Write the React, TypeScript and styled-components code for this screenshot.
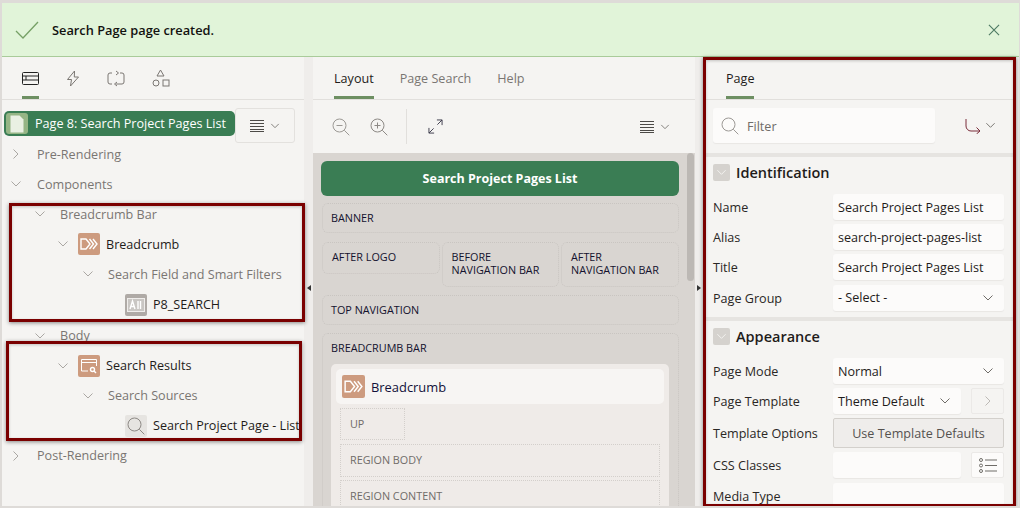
import React from "react";
import styled, { createGlobalStyle } from "styled-components";

const Global = createGlobalStyle`
  html, body { margin: 0; padding: 0; height: 100%; overflow: hidden; background: #fff; }
  body { font-family: "Open Sans", "Noto Sans", sans-serif; font-size: 12.6px; color: #1f1c1a; }
  * { box-sizing: border-box; }
`;

const Frame = styled.div`
  position: relative; width: 1020px; height: 508px; overflow: hidden;
  display: flex; flex-direction: column;
  border: solid #dedbd8; border-width: 3px 1px 2px 2px; background: #efedeb;
`;
const Banner = styled.div`
  height: 54px; flex: none; display: flex; align-items: center; background: #e1f4d9;
  border-bottom: 1px solid #a9cb9a; padding: 0 19px 0 13px; color: #12110f;
  font-weight: 600; font-size: 12.8px;
`;
const BannerText = styled.span` margin-left: 13px; flex: 1; `;
const Columns = styled.div` flex: 1; display: flex; min-height: 0; `;
const Panel = styled.div<{ $w: number }>`
  width: ${p => p.$w}px; flex: none; display: flex; flex-direction: column; background: #f5f4f2; overflow: hidden;
`;
const Splitter = styled.div<{ $w: number }>`
  width: ${p => p.$w}px; flex: none; display: flex; justify-content: center; padding-top: 228px; background: #efedeb;
`;
const Arrow = styled.span<{ $right?: boolean }>`
  width: 0; height: 0; border-style: solid; border-width: 3.5px 0 3.5px 4px;
  border-color: transparent transparent transparent #333;
  transform: ${p => (p.$right ? "none" : "rotate(180deg)")};
`;
const Tabs = styled.div<{ $pad: number; $gap: number }>`
  height: 43px; flex: none; display: flex; gap: ${p => p.$gap}px; padding-left: ${p => p.$pad}px;
  border-bottom: 1px solid #e1dfdc;
`;
const Tab = styled.div<{ $active?: boolean }>`
  height: 42px; display: flex; align-items: center; padding-top: 3px;
  color: ${p => (p.$active ? "#1f1c1a" : "#7a7672")};
  border-bottom: 3px solid ${p => (p.$active ? "#6d8f62" : "transparent")};
`;
const RootRow = styled.div` height: 39px; flex: none; display: flex; align-items: flex-start; padding: 8px 0 0 2px; `;
const RootBadge = styled.div`
  width: 231px; height: 25px; margin-top: 3px; display: flex; align-items: center; gap: 7px; padding-left: 2px;
  background: #3a7d54; color: #fff; border-radius: 5px; white-space: nowrap;
`;
const RootIcon = styled.span`
  width: 22px; height: 21px; display: flex; align-items: center; justify-content: center;
  background: #95b585; border-radius: 3px;
`;
const MenuButton = styled.div`
  width: 60px; height: 35px; display: flex; align-items: center; justify-content: center; gap: 6px;
  border: 1px solid #e3e1de; border-radius: 3px; background: #f5f4f2;
`;
const Tree = styled.div` flex: 1; `;
const TreeRow = styled.div<{ $x: number; $strong?: boolean; $top?: number }>`
  height: 30.1px; display: flex; align-items: center; white-space: nowrap; overflow: hidden;
  margin-top: ${p => p.$top ?? 0}px;
  padding-left: ${p => p.$x}px; color: ${p => (p.$strong ? "#1f1c1a" : "#7a7672")};
`;
const Twisty = styled.span<{ $gap?: number }>` width: 12px; height: 12px; flex: none; display: flex; margin-right: ${p => p.$gap ?? 14}px; `;
const TreeIcon = styled.span<{ $bg: string }>`
  width: 22px; height: 22px; flex: none; margin-right: 6px; border-radius: 2px; background: ${p => p.$bg};
  display: flex; align-items: center; justify-content: center;
`;
const Toolbar = styled.div`
  height: 53px; flex: none; display: flex; align-items: center; padding-left: 19px; padding-right: 25px;
`;
const Divider = styled.span` width: 1px; height: 35px; background: #e1dfdc; margin: 0 21px 0 18px; `;
const Spacer = styled.span` flex: 1; `;
const ZoomGap = styled.span` width: 20px; `;
const MenuGap = styled.span` width: 6px; `;
const Canvas = styled.div`
  position: relative; flex: 1; background: #d9d5d1; padding: 8px 16px 0 8px; overflow: hidden;
  display: flex; flex-direction: column; gap: 7px;
`;
const ScrollThumb = styled.span`
  position: absolute; right: 1px; top: 0; width: 7px; height: 128px; border-radius: 4px; background: #bcb8b4;
`;
const PageTitle = styled.div`
  height: 35px; flex: none; display: flex; align-items: center; justify-content: center; padding-bottom: 1px;
  background: #3a7d54; color: #fff; border-radius: 6px; font-weight: 700; font-size: 12.5px;
`;
const Slot = styled.div<{ $h: number; $top?: number }>`
  flex: none; height: ${p => p.$h}px; padding: 7px 8px; border: 1px dotted #c9c5c1; border-radius: 6px;
  margin-top: ${p => p.$top ?? 0}px; margin-left: 1px;
  font-size: 10.8px; font-weight: 500; line-height: 13px; color: #14122e;
`;
const SlotRow = styled.div` display: flex; gap: 2px; margin-top: 2px; margin-left: 1px; flex: none; align-items: flex-start; `;
const Cell = styled(Slot)` width: 117.5px; margin-left: 0; padding-left: 9px; `;
const BarSlot = styled(Slot)` padding: 7px 9px 0 8px; display: flex; flex-direction: column; `;
const Card = styled.div`
  margin-top: 10px; background: #efebe8; border-radius: 5px; padding: 5px; flex: none; height: 200px;
  display: flex; flex-direction: column;
`;
const CardHead = styled.div`
  height: 35px; flex: none; display: flex; align-items: center; gap: 6px; padding-left: 6px; background: #f7f5f3; border-radius: 5px;
  font-size: 12.9px; font-weight: 500; color: #12113a;
`;
const CardHeadText = styled.span` padding-top: 1px; `;
const Sub = styled.div<{ $w?: number; $h: number; $top?: number }>`
  flex: none; margin: ${p => p.$top ?? 4}px 4px 0; height: ${p => p.$h}px; width: ${p => (p.$w ? `${p.$w}px` : "auto")};
  border: 1px dotted #d3cfcb; padding: 0 0 2px 9px; display: flex; align-items: center;
  font-size: 10.8px; color: #6f6c68;
`;
const FilterRow = styled.div`
  height: 53px; flex: none; display: flex; align-items: flex-start; padding: 8px 0 0 10px;
`;
const FilterBox = styled.div`
  width: 222px; height: 35px; display: flex; align-items: center; gap: 8px; padding: 1px 0 0 8px; background: #fcfbfa;
  border-radius: 3px; color: #6f6c68; box-shadow: 0 1px 1px #e9e7e4;
`;
const RouteButton = styled.div` display: flex; align-items: center; gap: 4px; margin-left: 30px; height: 35px; `;
const Section = styled.div<{ $top?: number }>`
  flex: none; border-top: 4px solid #e6e4e1; padding: 0 10px; display: flex; flex-direction: column;
  margin-top: ${p => p.$top ?? 0}px;
`;
const SectionHead = styled.div`
  height: 30px; margin-bottom: 5px; flex: none; display: flex; align-items: center; gap: 6px;
  font-size: 14.5px; font-weight: 600; color: #1f1c1a;
`;
const Collapse = styled.span`
  width: 17px; height: 17px; display: flex; align-items: center; justify-content: center; background: #d5d2ce; border-radius: 2px;
`;
const Prop = styled.div<{ $h?: number }>`
  display: flex; align-items: center; height: ${p => p.$h ?? 30}px; flex: none;
`;
const Label = styled.div<{ $drop?: boolean }>`
  width: 120px; flex: none; color: #2a2725; padding-top: ${p => (p.$drop ? 1 : 0)}px;
`;
const Field = styled.div<{ $w?: number }>`
  width: ${p => p.$w ?? 171}px; height: 26px; flex: none; display: flex; align-items: center; justify-content: space-between;
  padding: 0 10px 0 5px; background: #fcfbfa; border-radius: 3px; white-space: nowrap; color: #1f1c1a;
  box-shadow: 0 1px 1px #e9e7e4;
`;
const SmallButton = styled.div<{ $dim?: boolean }>`
  width: 33px; height: 26px; margin-left: 10px; display: flex; align-items: center; justify-content: center;
  background: ${p => (p.$dim ? "#f5f4f2" : "#fcfbfa")}; border: 1px solid #ebe9e7; border-radius: 2px;
`;
const WideButton = styled.div`
  width: 171px; height: 30px; display: flex; align-items: center; justify-content: center;
  background: #efedeb; border: 1px solid #d3d0cc; border-radius: 2px; color: #55524f;
`;
const Outline = styled.div<{ $x: number; $y: number; $w: number; $h: number }>`
  position: absolute; left: ${p => p.$x}px; top: ${p => p.$y}px; width: ${p => p.$w}px; height: ${p => p.$h}px;
  border: 3px solid #7a0000; box-shadow: 0 1px 4px rgba(0,0,0,.45), inset 0 1px 3px rgba(0,0,0,.2); pointer-events: none;
`;

type C = { c?: string; s?: number };
const Chevron = ({ c = "#6f6c68", s = 12 }: C) => (
  <svg width={s} height={s} viewBox="0 0 12 12" fill="none" stroke={c} strokeWidth="1"><path d="M1.5 3.5 6 8l4.5-4.5" /></svg>
);
const ChevronR = ({ c = "#aaa7a3", s = 12 }: C) => (
  <svg width={s} height={s} viewBox="0 0 12 12" fill="none" stroke={c} strokeWidth="1"><path d="M3.5 1.5 8 6l-4.5 4.5" /></svg>
);
const Lines = () => (
  <svg width="14" height="12" viewBox="0 0 14 12" fill="none" stroke="#4c4a47" strokeWidth="1"><path d="M0 .5h14M0 3.500h14M0 6.500h14M0 9.500h14M0 11.500h14" /></svg>
);
const Magnifier = ({ c = "#9c9995", s = 18, mark }: C & { mark?: "minus" | "plus" }) => (
  <svg width={s} height={s} viewBox="0 0 18 18" fill="none" stroke={c} strokeWidth="1">
    <circle cx="7.5" cy="7.5" r="6.5" /><path d="m12.300 12.300 5 5" />
    {mark && <path d="M4.5 7.5h6" />}{mark === "plus" && <path d="M7.5 4.5v6" />}
  </svg>
);
const Crumb = ({ s = 22 }: { s?: number }) => (
  <svg width={s} height={s} viewBox="0 0 22 22" fill="none">
    <rect width="22" height="22" rx="2" fill="#cd9b7f" />
    <path d="M3 6h5l4 5-4 5H3z" stroke="#fff" strokeWidth="1.400" />
    <path d="m11.500 6 4 5-4 5M15 6l4 5-4 5" stroke="#fff" strokeWidth="1.400" />
  </svg>
);
const rows = [
  ["Name", "Search Project Pages List"],
  ["Alias", "search-project-pages-list"],
  ["Title", "Search Project Pages List"],
];

export default function App() {
  return (
    <Frame>
      <Global />
      <Banner>
        <svg width="24" height="20" viewBox="0 0 24 20" fill="none" stroke="#76a066" strokeWidth="1.300"><path d="m1 11 7 7L23 2" /></svg>
        <BannerText>Search Page page created.</BannerText>
        <svg width="12" height="12" viewBox="0 0 13 13" fill="none" stroke="#4d7a63" strokeWidth="1.200"><path d="m1 1 11 11M12 1 1 12" /></svg>
      </Banner>
      <Columns>
        <Panel $w={302}>
          <Tabs $pad={20} $gap={27}>
            <Tab $active>
              <svg width="17" height="13" viewBox="0 0 17 13" fill="none" stroke="#222"><rect x=".5" y=".5" width="16" height="12" rx="1" /><path d="M.5 4h16M.5 8h16M4 4v4" /></svg>
            </Tab>
            <Tab>
              <svg width="14" height="17" viewBox="0 0 14 17" fill="none" stroke="#7a7672"><path d="M8.500 1 1.500 9.500h4L4.500 16l8-9h-4.200z" /></svg>
            </Tab>
            <Tab>
              <svg width="18" height="17" viewBox="0 0 18 17" fill="none" stroke="#7a7672"><path d="M5 3H3a2 2 0 0 0-2 2v7a2 2 0 0 0 2 2h2M13 3h2a2 2 0 0 1 2 2v7a2 2 0 0 1-2 2H9M9 1l2.500 2L9 5M10 12l-2.500 2L10 16" /></svg>
            </Tab>
            <Tab>
              <svg width="18" height="18" viewBox="0 0 18 18" fill="none" stroke="#7a7672"><path d="M8.500 1 12 7H5z" /><circle cx="4" cy="14" r="3" /><rect x="11" y="11" width="6" height="6" /></svg>
            </Tab>
          </Tabs>
          <RootRow>
            <RootBadge>
              <RootIcon>
                <svg width="14" height="18" viewBox="0 0 14 18" fill="#e9f0e3"><path d="M.5.5h9l4 4v13H.5z" /></svg>
              </RootIcon>
              Page 8: Search Project Pages List
            </RootBadge>
            <MenuButton><Lines /><Chevron s={10} /></MenuButton>
          </RootRow>
          <Tree>
            <TreeRow $x={8}><Twisty $gap={15}><ChevronR /></Twisty>Pre-Rendering</TreeRow>
            <TreeRow $x={8}><Twisty $gap={15}><Chevron c="#aaa7a3" /></Twisty>Components</TreeRow>
            <TreeRow $x={32}><Twisty><Chevron c="#aaa7a3" /></Twisty>Breadcrumb Bar</TreeRow>
            <TreeRow $x={55} $strong><Twisty $gap={9}><Chevron c="#aaa7a3" /></Twisty><TreeIcon $bg="transparent"><Crumb /></TreeIcon>Breadcrumb</TreeRow>
            <TreeRow $x={80}><Twisty><Chevron c="#aaa7a3" /></Twisty>Search Field and Smart Filters</TreeRow>
            <TreeRow $x={123} $strong>
              <TreeIcon $bg="#afaaa6">
                <svg width="18" height="14" viewBox="0 0 18 14"><rect x=".5" y=".5" width="17" height="13" fill="#c9c6c3" stroke="#efedeb" /><path d="m3 11 2.500-8L8 11M3.800 8.500h3.400M11 3v8M13.500 3v8" stroke="#fff" fill="none" strokeWidth="1.400" /></svg>
              </TreeIcon>
              P8_SEARCH
            </TreeRow>
            <TreeRow $x={32} $top={1}><Twisty><Chevron c="#aaa7a3" /></Twisty>Body</TreeRow>
            <TreeRow $x={55} $strong>
              <Twisty $gap={9}><Chevron c="#aaa7a3" /></Twisty>
              <TreeIcon $bg="#cd9b7f">
                <svg width="18" height="16" viewBox="0 0 18 16" fill="none" stroke="#fff"><path d="M8 13H1.500V1.500h15V8M1.500 4.500h15" /><circle cx="12.500" cy="11.500" r="2" strokeWidth="1.400" /><path d="m14 13 2 2" strokeWidth="1.400" /></svg>
              </TreeIcon>
              Search Results
            </TreeRow>
            <TreeRow $x={80}><Twisty><Chevron c="#aaa7a3" /></Twisty>Search Sources</TreeRow>
            <TreeRow $x={123} $strong><TreeIcon $bg="#e6e4e1"><Magnifier c="#8d8985" s={18} /></TreeIcon>Search Project Page - List</TreeRow>
            <TreeRow $x={8}><Twisty $gap={15}><ChevronR /></Twisty>Post-Rendering</TreeRow>
          </Tree>
        </Panel>
        <Splitter $w={9}><Arrow /></Splitter>
        <Panel $w={382}>
          <Tabs $pad={21} $gap={26}>
            <Tab $active>Layout</Tab>
            <Tab>Page Search</Tab>
            <Tab>Help</Tab>
          </Tabs>
          <Toolbar>
            <Magnifier mark="minus" />
            <ZoomGap />
            <Magnifier mark="plus" c="#8d8985" />
            <Divider />
            <svg width="15" height="15" viewBox="0 0 16 16" fill="none" stroke="#3b3a4a"><path d="M1 15 6 10M10 6l5-5M9.500 1H15v5.500M1 9.500V15h5.500" /></svg>
            <Spacer />
            <Lines />
            <MenuGap />
            <Chevron s={10} />
          </Toolbar>
          <Canvas>
            <ScrollThumb />
            <PageTitle>Search Project Pages List</PageTitle>
            <Slot $h={30}>BANNER</Slot>
            <SlotRow>
              <Cell $h={32}>AFTER LOGO</Cell>
              <Cell $h={45}>BEFORE<br />NAVIGATION BAR</Cell>
              <Cell $h={45}>AFTER<br />NAVIGATION BAR</Cell>
            </SlotRow>
            <Slot $h={30} $top={1}>TOP NAVIGATION</Slot>
            <BarSlot $h={220} $top={1}>
              BREADCRUMB BAR
              <Card>
                <CardHead><Crumb s={23} /><CardHeadText>Breadcrumb</CardHeadText></CardHead>
                <Sub $w={65} $h={32}>UP</Sub>
                <Sub $h={33}>REGION BODY</Sub>
                <Sub $h={33} $top={3}>REGION CONTENT</Sub>
              </Card>
            </BarSlot>
          </Canvas>
        </Panel>
        <Splitter $w={8}><Arrow $right /></Splitter>
        <Panel $w={313}>
          <Tabs $pad={23} $gap={0}>
            <Tab $active>Page</Tab>
          </Tabs>
          <FilterRow>
            <FilterBox><Magnifier s={18} />Filter</FilterBox>
            <RouteButton>
              <svg width="16" height="16" viewBox="0 0 16 16" fill="none" stroke="#7a2c3a"><path d="M1 1v7a5 5 0 0 0 5 5h9M11.500 9.500 15 13l-3.500 3" /></svg>
              <Chevron s={11} />
            </RouteButton>
          </FilterRow>
          <Section>
            <SectionHead><Collapse><Chevron c="#f5f4f2" s={11} /></Collapse>Identification</SectionHead>
            {rows.map(([l, v]) => (
              <Prop key={l}><Label>{l}</Label><Field>{v}</Field></Prop>
            ))}
            <Prop $h={31}><Label $drop>Page Group</Label><Field>- Select -<Chevron /></Field></Prop>
          </Section>
          <Section $top={4}>
            <SectionHead><Collapse><Chevron c="#f5f4f2" s={11} /></Collapse>Appearance</SectionHead>
            <Prop><Label>Page Mode</Label><Field>Normal<Chevron /></Field></Prop>
            <Prop><Label>Page Template</Label><Field $w={128}>Theme Default<Chevron /></Field><SmallButton $dim><ChevronR c="#bcb9b5" /></SmallButton></Prop>
            <Prop $h={34}><Label>Template Options</Label><WideButton>Use Template Defaults</WideButton></Prop>
            <Prop><Label>CSS Classes</Label><Field $w={128} /><SmallButton>
              <svg width="18" height="15" viewBox="0 0 18 15" fill="none" stroke="#6f6c68"><circle cx="2" cy="2" r="1.500" /><circle cx="2" cy="7.500" r="1.500" /><circle cx="2" cy="13" r="1.500" /><path d="M6 2h12M6 7.500h12M6 13h12" /></svg>
            </SmallButton></Prop>
            <Prop $h={31}><Label $drop>Media Type</Label><Field /></Prop>
          </Section>
        </Panel>
      </Columns>
      <Outline $x={7} $y={200} $w={296} $h={119} />
      <Outline $x={4} $y={338} $w={296} $h={100} />
      <Outline $x={701} $y={54} $w={313} $h={450} />
    </Frame>
  );
}
